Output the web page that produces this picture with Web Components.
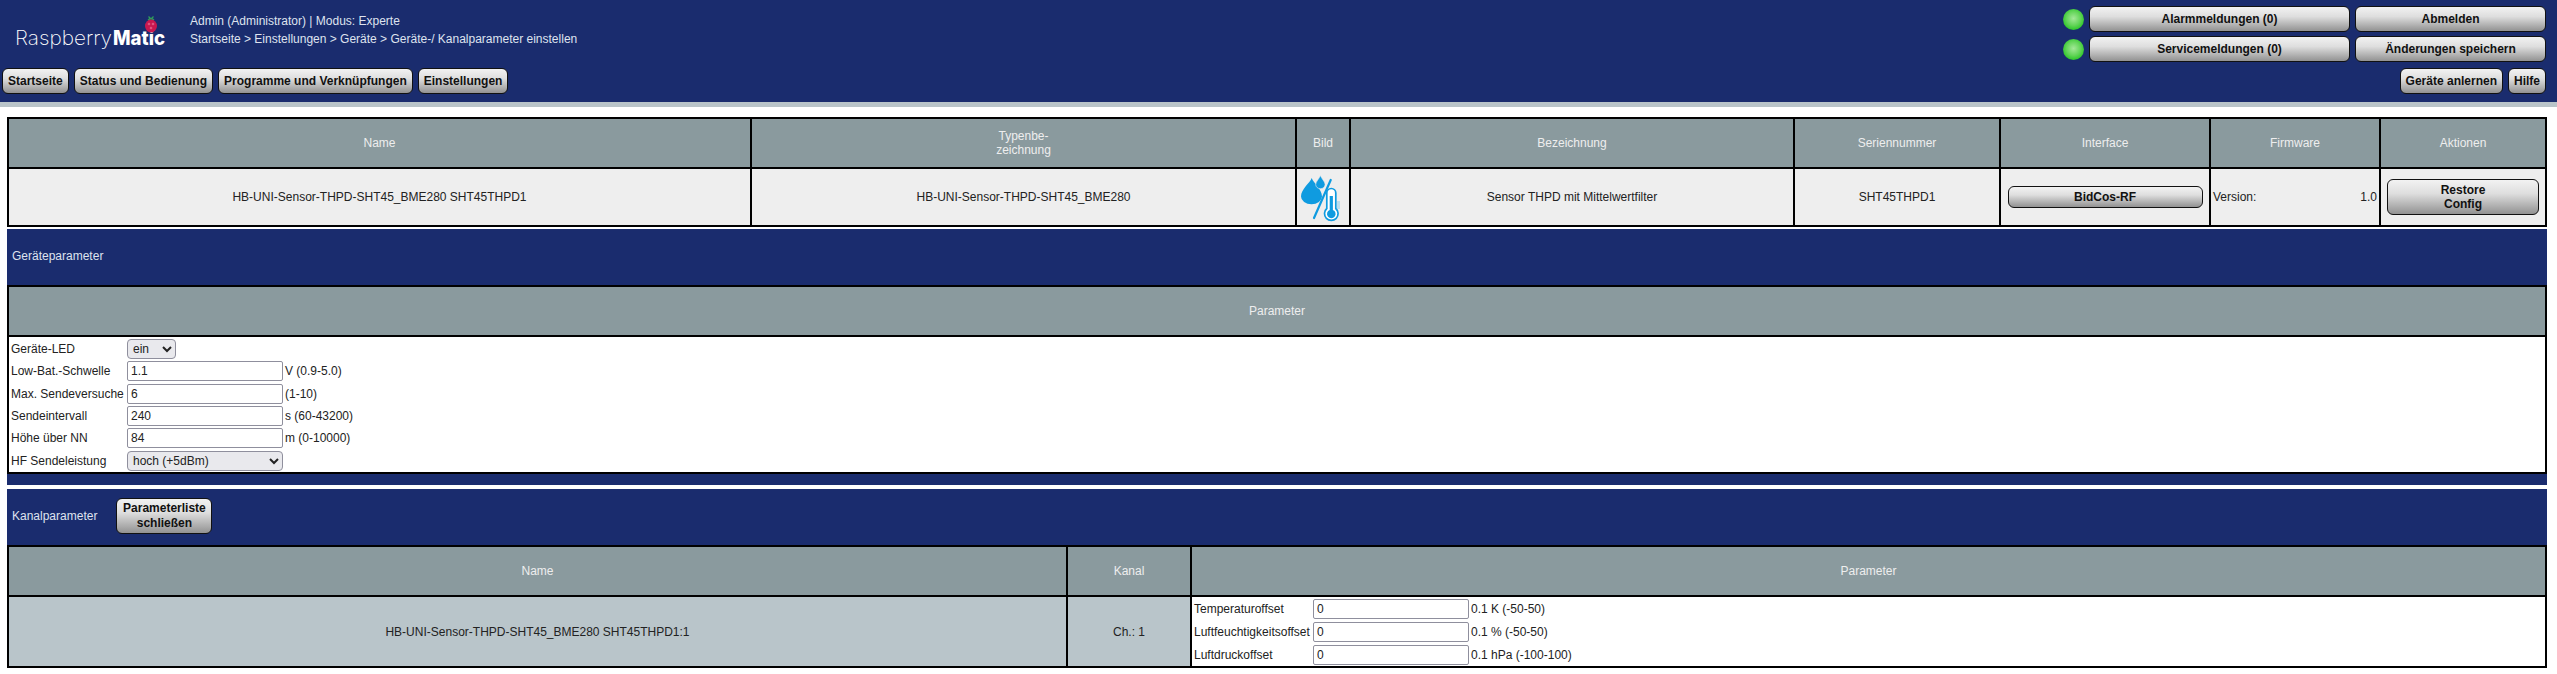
<!DOCTYPE html>
<html lang="de">
<head>
<meta charset="utf-8">
<title>RaspberryMatic</title>
<style>
  html, body { margin: 0; padding: 0; background: #fff; overflow: hidden; }
  body { font: 12px "Liberation Sans", Arial, sans-serif; color: #222; }
</style>
</head>
<body>
<hm-page>
  <hm-header></hm-header>
  <device-table></device-table>
  <param-panel title-text="Geräteparameter" variant="device"></param-panel>
  <param-panel title-text="Kanalparameter" variant="channel"></param-panel>
</hm-page>

<script>
const NAVY = "#1a2c6e";

class HmPage extends HTMLElement {
    constructor() {
        super();
        this.attachShadow({ mode: "open" });
        this.shadowRoot.innerHTML = `
            <style>
                :host { display: block; width: 2557px; height: 674px; overflow: hidden; }
            </style>
            <slot></slot>
        `;
    }
}

class HmButton extends HTMLElement {
    constructor() {
        super();
        this.attachShadow({ mode: "open" });
        this.shadowRoot.innerHTML = `
            <style>
                :host {
                    display: flex;
                    align-items: center;
                    justify-content: center;
                    box-sizing: border-box;
                    height: 26px;
                    border: 1px solid #111;
                    border-radius: 6px;
                    background: linear-gradient(#f2f2f2, #dedede 40%, #929292);
                    color: #111;
                    font: bold 12px "Liberation Sans", Arial, sans-serif;
                    text-align: center;
                    line-height: 15px;
                    white-space: nowrap;
                }
            </style>
            <slot></slot>
        `;
    }
}

class HmLed extends HTMLElement {
    constructor() {
        super();
        this.attachShadow({ mode: "open" });
        this.shadowRoot.innerHTML = `
            <style>
                :host {
                    display: block;
                    width: 21px;
                    height: 21px;
                    border-radius: 50%;
                    background: radial-gradient(circle at 50% 45%, #a4e898 0, #62d558 45%, #18c018 85%, #10a810 100%);
                }
            </style>
        `;
    }
}

class HmHeader extends HTMLElement {
    constructor() {
        super();
        this.attachShadow({ mode: "open" });
        this.shadowRoot.innerHTML = `
            <style>
                :host {
                    display: block;
                    box-sizing: border-box;
                    height: 107px;
                    background: ${NAVY};
                    border-bottom: 5px solid #b9c4c9;
                    color: #dfe3ee;
                    font: 12px "Liberation Sans", Arial, sans-serif;
                }
                .top { display: flex; height: 68px; }
                .logo { width: 190px; height: 68px; flex: none; }
                .logo text { font-family: Inter, "Liberation Sans", sans-serif; fill: #fff; }
                .info { flex: 1; display: flex; flex-direction: column; padding-top: 14px; gap: 3px; line-height: 15px; }
                .status {
                    display: grid;
                    grid-template-columns: 21px 261px 191px;
                    grid-auto-rows: 26px;
                    gap: 4px 5px;
                    padding: 6px 11px 0 0;
                    align-items: center;
                }
                .nav { display: flex; gap: 5px; padding: 0 11px 0 2px; }
                .nav .gap { flex: 1; }
                .nav hm-button { padding: 0 5px; }
            </style>
            <div class="top">
                <svg class="logo" viewBox="0 0 190 68">
                    <text x="15" y="45" font-size="20" font-weight="200" textLength="97" lengthAdjust="spacingAndGlyphs">Raspberry</text>
                    <text x="113" y="45" font-size="20" font-weight="800" textLength="52" lengthAdjust="spacingAndGlyphs">Matic</text>
                    <path d="M151 19l-2.500-2.500M151 19l2.500-2.500M148 20q3-2.500 6 0" stroke="#2f9e5a" stroke-width="1.300" fill="none"/>
                    <ellipse cx="151" cy="26" rx="6" ry="6.500" fill="#c8174f"/>
                    <circle cx="149" cy="24" r="1.300" fill="#e0527e"/>
                    <circle cx="153" cy="24" r="1.300" fill="#e0527e"/>
                    <circle cx="151" cy="28" r="1.300" fill="#e0527e"/>
                </svg>
                <div class="info">
                    <div>Admin (Administrator) | Modus: Experte</div>
                    <div>Startseite &gt; Einstellungen &gt; Geräte &gt; Geräte-/ Kanalparameter einstellen</div>
                </div>
                <div class="status">
                    <hm-led></hm-led><hm-button>Alarmmeldungen (0)</hm-button><hm-button>Abmelden</hm-button>
                    <hm-led></hm-led><hm-button>Servicemeldungen (0)</hm-button><hm-button>Änderungen speichern</hm-button>
                </div>
            </div>
            <div class="nav">
                <hm-button>Startseite</hm-button>
                <hm-button>Status und Bedienung</hm-button>
                <hm-button>Programme und Verknüpfungen</hm-button>
                <hm-button>Einstellungen</hm-button>
                <div class="gap"></div>
                <hm-button>Geräte anlernen</hm-button>
                <hm-button>Hilfe</hm-button>
            </div>
        `;
    }
}

class DeviceIcon extends HTMLElement {
    constructor() {
        super();
        this.attachShadow({ mode: "open" });
        this.shadowRoot.innerHTML = `
            <style>:host { display: block; width: 50px; height: 50px; }</style>
            <svg width="50" height="50" viewBox="0 0 50 50">
                <path d="M13.700 6 C12 11 3 17 3 24.500 A10.500 7.800 0 0 0 24 24.500 C24 17 15.400 11 13.700 6Z" fill="#0f9be0"/>
                <path d="M22.400 3.300 C21.500 6.500 17.700 9.500 17.700 12.500 A4.700 4.200 0 0 0 27.100 12.500 C27.100 9.500 23.300 6.500 22.400 3.300Z" fill="#0f9be0" stroke="#eee" stroke-width=".6"/>
                <path d="M32.700 8 L16 46" stroke="#0f9be0" stroke-width="2.200" stroke-linecap="round"/>
                <path d="M28.800 21 a4.500 4.500 0 0 1 9 0 V36.500 a6.800 6.800 0 1 1 -9 0Z" fill="#fff" stroke="#0f9be0" stroke-width="1.700"/>
                <path d="M31.700 24 h3.200 V38 a4.300 4.300 0 1 1 -3.200 0Z" fill="#0f9be0"/>
                <path d="M39 30h3M39 32h3M39 34h3M39 36h3" stroke="#6fc3ec" stroke-width=".8"/>
            </svg>
        `;
    }
}

class DeviceTable extends HTMLElement {
    constructor() {
        super();
        this.attachShadow({ mode: "open" });
        this.shadowRoot.innerHTML = `
            <style>
                :host {
                    display: grid;
                    box-sizing: border-box;
                    width: 2540px;
                    height: 110px;
                    margin: 10px 0 2px 7px;
                    padding: 2px;
                    gap: 2px;
                    background: #000;
                    grid-template-columns: 741px 543px 52px 442px 204px 208px 168px 164px;
                    grid-template-rows: 48px 56px;
                    font: 12px "Liberation Sans", Arial, sans-serif;
                }
                .th, .td { display: flex; align-items: center; justify-content: center; text-align: center; line-height: 14px; }
                .th { background: #8a9a9e; color: #eee; }
                .td { background: #eee; color: #222; }
                .fw { justify-content: space-between; padding: 0 2px; }
                hm-button.wide { width: 195px; height: 22px; }
                hm-button.act { width: 152px; height: 36px; line-height: 14px; }
            </style>
            <div class="th">Name</div>
            <div class="th">Typenbe-<br>zeichnung</div>
            <div class="th">Bild</div>
            <div class="th">Bezeichnung</div>
            <div class="th">Seriennummer</div>
            <div class="th">Interface</div>
            <div class="th">Firmware</div>
            <div class="th">Aktionen</div>
            <div class="td">HB-UNI-Sensor-THPD-SHT45_BME280 SHT45THPD1</div>
            <div class="td">HB-UNI-Sensor-THPD-SHT45_BME280</div>
            <div class="td"><device-icon></device-icon></div>
            <div class="td">Sensor THPD mit Mittelwertfilter</div>
            <div class="td">SHT45THPD1</div>
            <div class="td"><hm-button class="wide">BidCos-RF</hm-button></div>
            <div class="td fw"><span>Version:</span><span>1.0</span></div>
            <div class="td"><hm-button class="act">Restore<br>Config</hm-button></div>
        `;
    }
}

class ParamRow extends HTMLElement {
    constructor() {
        super();
        this.attachShadow({ mode: "open" });
        const label = this.getAttribute("label");
        const value = this.getAttribute("value");
        const hint = this.getAttribute("hint") || "";
        const options = this.getAttribute("select");
        const selectWidth = this.getAttribute("select-width");
        const control = options
            ? `<select style="width:${selectWidth}px"><option>${options}</option></select>`
            : `<input type="text" value="${value}">`;
        this.shadowRoot.innerHTML = `
            <style>
                :host {
                    display: grid;
                    grid-template-columns: var(--label-width) auto 1fr;
                    align-items: center;
                    font: 12px "Liberation Sans", Arial, sans-serif;
                    color: #222;
                }
                input, select {
                    box-sizing: border-box;
                    height: 20px;
                    margin: 0;
                    font: 12px "Liberation Sans", Arial, sans-serif;
                    color: #222;
                }
                input {
                    width: 156px;
                    padding: 0 3px;
                    background: #fff;
                    border: 1px solid #8f8f9d;
                    border-radius: 2px;
                }
                select {
                    padding: 0 0 0 1px;
                    background-color: #e9e9ed;
                    border: 1px solid #8f8f9d;
                    border-radius: 4px;
                }
                .hint { padding-left: 2px; }
            </style>
            <span>${label}</span>
            ${control}
            <span class="hint">${hint}</span>
        `;
    }
}

class ParamPanel extends HTMLElement {
    constructor() {
        super();
        this.attachShadow({ mode: "open" });
        const channel = this.getAttribute("variant") === "channel";
        const title = this.getAttribute("title-text");
        this.shadowRoot.innerHTML = `
            <style>
                :host {
                    display: block;
                    box-sizing: border-box;
                    width: 2540px;
                    margin-left: 7px;
                    background: ${NAVY};
                    font: 12px "Liberation Sans", Arial, sans-serif;
                    ${channel ? "margin-top: 4px;" : "height: 256px;"}
                }
                .title {
                    display: flex;
                    align-items: center;
                    box-sizing: border-box;
                    height: 56px;
                    padding: 0 0 2px 5px;
                    gap: 19px;
                    color: #dfe3ee;
                }
                hm-button.close { width: 96px; height: 36px; }
                .grid {
                    display: grid;
                    padding: 2px;
                    gap: 2px;
                    background: #000;
                }
                .device { grid-template-columns: 1fr; grid-template-rows: 48px 135px; height: 189px; box-sizing: border-box; }
                .channel { grid-template-columns: 1057px 122px 1fr; grid-template-rows: 48px 69px; }
                .th { background: #8a9a9e; color: #eee; display: flex; align-items: center; justify-content: center; }
                .name { background: #b9c5ca; color: #222; display: flex; align-items: center; justify-content: center; }
                .rows { background: #fff; display: grid; padding: 1px 2px 0; }
                .device .rows { --label-width: 116px; grid-template-rows: repeat(6, 1fr); }
                .channel .rows { --label-width: 119px; grid-template-rows: repeat(3, 1fr); }
            </style>
            <div class="title">
                <span>${title}</span>
                ${channel ? `<hm-button class="close">Parameterliste<br>schließen</hm-button>` : ""}
            </div>
            ${channel ? `
            <div class="grid channel">
                <div class="th">Name</div>
                <div class="th">Kanal</div>
                <div class="th">Parameter</div>
                <div class="name">HB-UNI-Sensor-THPD-SHT45_BME280 SHT45THPD1:1</div>
                <div class="name">Ch.: 1</div>
                <div class="rows">
                    <param-row label="Temperaturoffset" value="0" hint="0.1 K (-50-50)"></param-row>
                    <param-row label="Luftfeuchtigkeitsoffset" value="0" hint="0.1 % (-50-50)"></param-row>
                    <param-row label="Luftdruckoffset" value="0" hint="0.1 hPa (-100-100)"></param-row>
                </div>
            </div>` : `
            <div class="grid device">
                <div class="th">Parameter</div>
                <div class="rows">
                    <param-row label="Geräte-LED" select="ein" select-width="49"></param-row>
                    <param-row label="Low-Bat.-Schwelle" value="1.1" hint="V (0.9-5.0)"></param-row>
                    <param-row label="Max. Sendeversuche" value="6" hint="(1-10)"></param-row>
                    <param-row label="Sendeintervall" value="240" hint="s (60-43200)"></param-row>
                    <param-row label="Höhe über NN" value="84" hint="m (0-10000)"></param-row>
                    <param-row label="HF Sendeleistung" select="hoch (+5dBm)" select-width="156"></param-row>
                </div>
            </div>`}
        `;
    }
}

customElements.define("hm-page", HmPage);
customElements.define("hm-button", HmButton);
customElements.define("hm-led", HmLed);
customElements.define("hm-header", HmHeader);
customElements.define("device-icon", DeviceIcon);
customElements.define("device-table", DeviceTable);
customElements.define("param-row", ParamRow);
customElements.define("param-panel", ParamPanel);
</script>
</body>
</html>
